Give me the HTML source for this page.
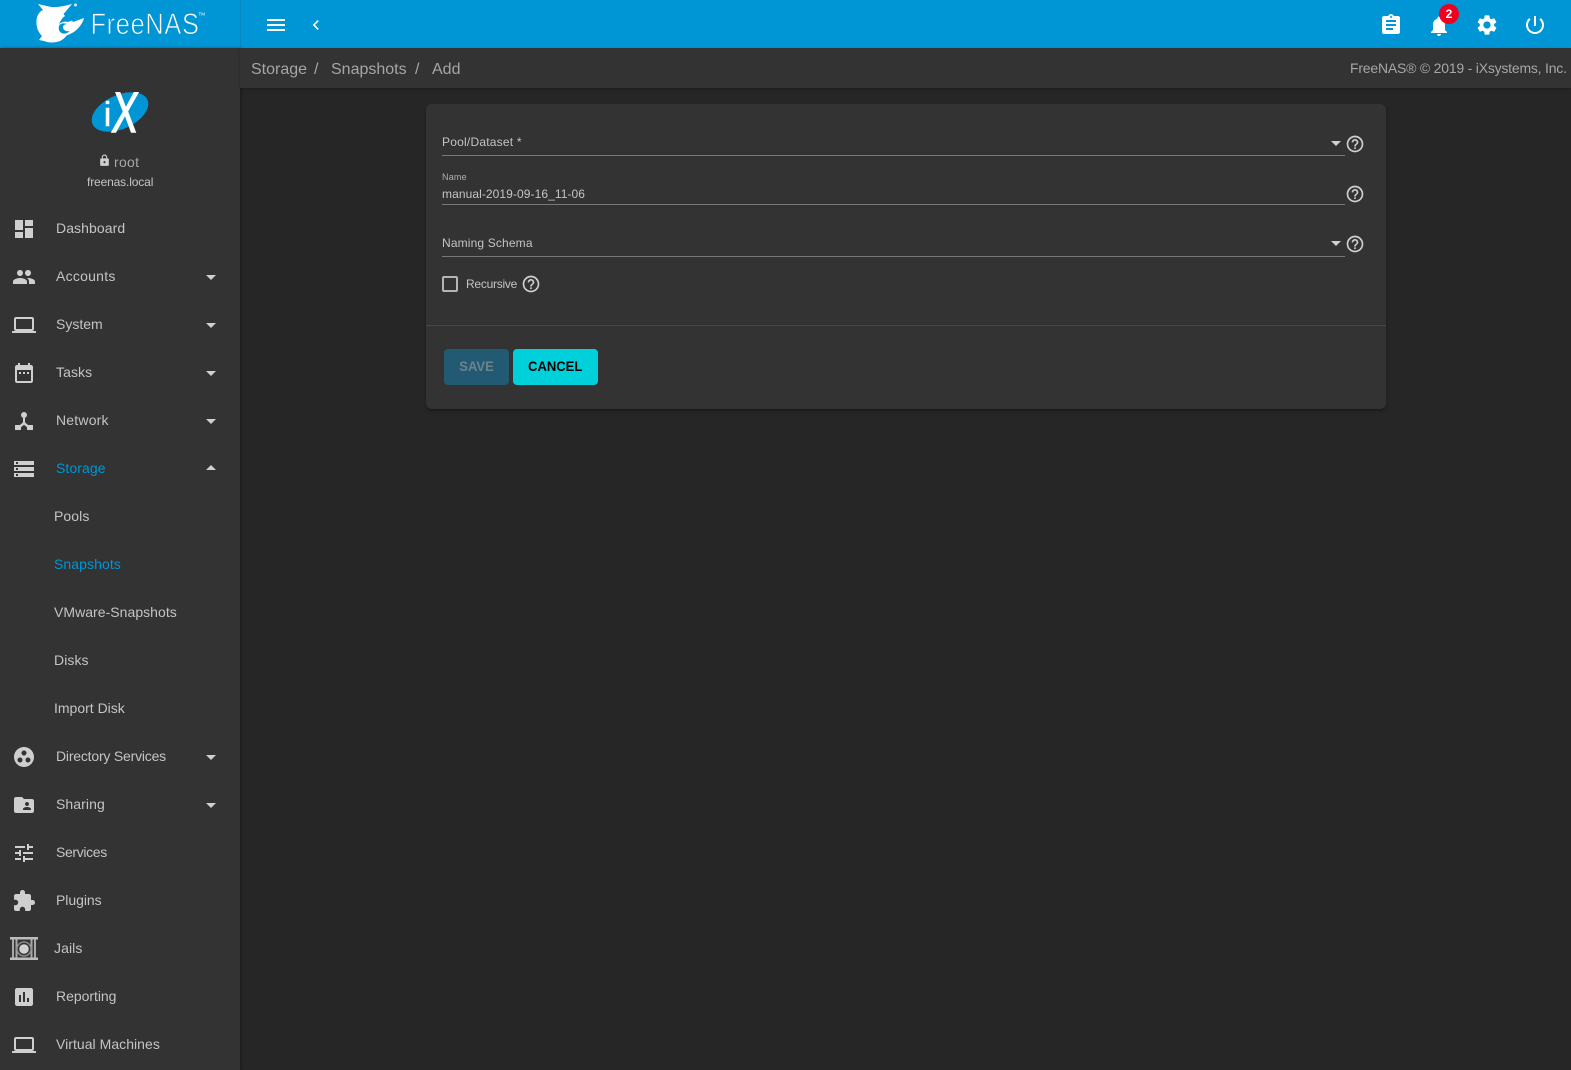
<!DOCTYPE html>
<html lang="en"><head><meta charset="utf-8"><title>FreeNAS - Add Snapshot</title>
<style>
html,body{margin:0;padding:0;width:1571px;height:1070px;overflow:hidden;background:#262626;font-family:"Liberation Sans",sans-serif;color:#c4c4c4}
*{box-sizing:border-box}
.a{position:absolute}
.t{position:absolute;white-space:nowrap;line-height:20px;height:20px}
svg{position:absolute;overflow:visible}
svg.i{width:24px;height:24px;fill:#cfcfcf}
.nav{font-size:14px;letter-spacing:.08px;color:#c4c4c4}
.car{position:absolute;left:206px;width:0;height:0;border-left:5px solid transparent;border-right:5px solid transparent;border-top:5px solid #d0d0d0}
.car.up{border-top:0;border-bottom:5px solid #d0d0d0}
.blue{color:#0095d5}
.line{position:absolute;left:442px;width:903px;height:1px;background:#777}
.fld{font-size:12px;letter-spacing:.22px;color:#c4c4c4}
.help{width:20px;height:20px;fill:#cfcfcf}
.sc{position:absolute;left:1331px;width:0;height:0;border-left:5px solid transparent;border-right:5px solid transparent;border-top:5px solid #d0d0d0}
.bc{font-size:16px;color:#a6a6a6;letter-spacing:0}
.btn span{display:inline-block;transform:scaleX(.93);font-weight:bold}
</style></head><body>

<div class="a" style="left:0;top:0;width:1571px;height:48px;background:#0095d5"></div>
<div class="a" style="left:240px;top:0;width:1px;height:48px;background:#0a87bd"></div>
<div class="a" style="left:0;top:48px;width:240px;height:1022px;background:#333;box-shadow:1px 0 3px rgba(0,0,0,.35)"></div>
<div class="a" style="left:240px;top:48px;width:1331px;height:40px;background:#333;box-shadow:0 1px 2px rgba(0,0,0,.25)"></div>

<!-- brand -->
<svg style="left:0;top:0" width="240" height="48">
<path fill="#fff" d="M38 4L50 6.700C54 7.500 60 7.300 72 4L67 10L63.500 14L65 16L62.500 18C61 20 60 22 59 24C62 22 65 21 68 22L72 20.500L73 22L84 18C83 23 78 30 72 33L66 36C65 38 62 40 60 41C55 43 48 43 44 41L39 40L42 36C38 32 36 27 36.500 20C37 15 40 11 43 10Z"/>
<path fill="#0095d5" d="M59 26C58 30 60 33 63 33.500C65 34 68 33 70 31C66 32 63 30 63 27C63 25.500 65 24 67 24C64 23 60 23 59 26Z"/>
<circle cx="75.500" cy="5" r="1.500" fill="#cfe9f6"/>
<text transform="translate(90.500 34) scale(.86 1)" font-family="Liberation Sans" font-size="29.500" letter-spacing=".8" fill="#fff" stroke="#0095d5" stroke-width=".8">FreeNAS</text>
<text x="198.500" y="15.500" font-family="Liberation Sans" font-size="4.500" fill="#fff">TM</text>
</svg>

<svg class="i" viewBox="0 0 24 24" style="left:264px;top:13px;fill:#fff"><path d="M3 18h18v-2H3v2zm0-5h18v-2H3v2zm0-7v2h18V6H3z"/></svg>
<svg viewBox="0 0 24 24" style="left:305.500px;top:15px;width:20px;height:20px;fill:#fff"><path d="M15.410 7.410L14 6l-6 6 6 6 1.410-1.410L10.830 12z"/></svg>

<svg class="i" viewBox="0 0 24 24" style="left:1379px;top:13px;fill:#fff"><path d="M19 3h-4.180C14.400 1.840 13.300 1 12 1c-1.300 0-2.400.84-2.820 2H5c-1.100 0-2 .9-2 2v14c0 1.100.9 2 2 2h14c1.100 0 2-.9 2-2V5c0-1.100-.9-2-2-2zm-7 0c.55 0 1 .45 1 1s-.45 1-1 1-1-.45-1-1 .45-1 1-1zm2 14H7v-2h7v2zm3-4H7v-2h10v2zm0-4H7V7h10v2z"/></svg>
<svg class="i" viewBox="0 0 24 24" style="left:1427px;top:14px;fill:#fff"><path d="M12 22c1.100 0 2-.9 2-2h-4c0 1.100.89 2 2 2zm6-6v-5c0-3.070-1.640-5.640-4.500-6.320V4c0-.83-.67-1.500-1.500-1.500s-1.500.67-1.500 1.500v.68C7.630 5.360 6 7.920 6 11v5l-2 2v1h16v-1l-2-2z"/></svg>
<div class="a" style="left:1439px;top:4px;width:20px;height:20px;border-radius:50%;background:#f0001f;color:#fff;font-size:12px;font-weight:bold;text-align:center;line-height:20px">2</div>
<svg class="i" viewBox="0 0 24 24" style="left:1475px;top:13px;fill:#fff"><path d="M19.140 12.940c.04-.3.06-.61.06-.94 0-.32-.02-.64-.07-.94l2.030-1.580c.18-.14.23-.41.12-.61l-1.920-3.320c-.12-.22-.37-.29-.59-.22l-2.390.96c-.5-.38-1.030-.7-1.620-.94l-.36-2.540c-.04-.24-.24-.41-.48-.41h-3.840c-.24 0-.43.17-.47.41l-.36 2.540c-.59.24-1.130.57-1.620.94l-2.390-.96c-.22-.08-.47 0-.59.22L2.740 8.870c-.12.21-.08.47.12.61l2.030 1.580c-.05.3-.09.63-.09.94s.02.64.07.94l-2.030 1.580c-.18.14-.23.41-.12.61l1.920 3.320c.12.22.37.29.59.22l2.390-.96c.5.38 1.030.7 1.620.94l.36 2.540c.05.24.24.41.48.41h3.840c.24 0 .44-.17.47-.41l.36-2.540c.59-.24 1.130-.56 1.620-.94l2.390.96c.22.08.47 0 .59-.22l1.920-3.320c.12-.22.07-.47-.12-.61l-2.010-1.580zM12 15.600c-1.980 0-3.600-1.620-3.600-3.600s1.620-3.600 3.600-3.600 3.600 1.620 3.600 3.600-1.620 3.600-3.600 3.600z"/></svg>
<svg class="i" viewBox="0 0 24 24" style="left:1523px;top:13px;fill:#fff"><path d="M13 3h-2v10h2V3zm4.830 2.170l-1.420 1.420C17.990 7.860 19 9.810 19 12c0 3.870-3.130 7-7 7s-7-3.130-7-7c0-2.190 1.010-4.140 2.580-5.420L6.170 5.170C4.230 6.820 3 9.260 3 12c0 4.970 4.030 9 9 9s9-4.030 9-9c0-2.740-1.230-5.180-3.170-6.830z"/></svg>

<!-- breadcrumb -->
<div class="t bc" style="left:251px;top:60px">Storage</div>
<div class="t bc" style="left:314px;top:60px">/</div>
<div class="t bc" style="left:331px;top:60px">Snapshots</div>
<div class="t bc" style="left:415px;top:60px">/</div>
<div class="t bc" style="left:432px;top:60px">Add</div>
<div class="t" style="left:1350px;top:58px;font-size:14px;color:#a6a6a6;letter-spacing:-.21px">FreeNAS® © 2019 - iXsystems, Inc.</div>

<!-- user -->
<svg style="left:0;top:0" width="240" height="148">
<ellipse cx="120" cy="112" rx="30" ry="17" fill="#0095d5" transform="rotate(-24 120 112)"/>
<text transform="translate(103.700 126)" font-family="Liberation Sans" font-size="34" fill="#fff" stroke="#fff" stroke-width=".5">i</text>
<text transform="translate(111 132) skewX(-5) scale(.66 1)" font-family="Liberation Sans" font-size="57" fill="#fff" stroke="#fff" stroke-width="1.600">X</text>
</svg>
<svg viewBox="0 0 24 24" style="left:97.500px;top:154px;width:13px;height:13px;fill:#cfcfcf"><path d="M18 8h-1V6c0-2.760-2.240-5-5-5S7 3.240 7 6v2H6c-1.100 0-2 .9-2 2v10c0 1.100.9 2 2 2h12c1.100 0 2-.9 2-2V10c0-1.100-.9-2-2-2zm-6 9c-1.100 0-2-.9-2-2s.9-2 2-2 2 .9 2 2-.9 2-2 2zm3.100-9H8.900V6c0-1.710 1.390-3.100 3.100-3.100 1.710 0 3.100 1.390 3.100 3.100v2z"/></svg>
<div class="t" style="left:114px;top:152px;font-size:14px;color:#a8a8a8;letter-spacing:.3px">root</div>
<div class="t" style="left:87px;top:172px;font-size:12px;color:#c4c4c4;letter-spacing:-.14px">freenas.local</div>

<!-- nav -->
<svg class="i" viewBox="0 0 24 24" style="left:12px;top:217px"><path d="M3 13h8V3H3v10zm0 8h8v-6H3v6zm10 0h8V11h-8v10zm0-18v6h8V3h-8z"/></svg>
<div class="t nav" style="left:56px;top:218px">Dashboard</div>

<svg class="i" viewBox="0 0 24 24" style="left:12px;top:265px"><path d="M16 11c1.660 0 2.990-1.340 2.990-3S17.660 5 16 5c-1.660 0-3 1.340-3 3s1.340 3 3 3zm-8 0c1.660 0 2.990-1.340 2.990-3S9.660 5 8 5C6.340 5 5 6.340 5 8s1.340 3 3 3zm0 2c-2.330 0-7 1.170-7 3.500V19h14v-2.500c0-2.330-4.670-3.500-7-3.500zm8 0c-.29 0-.62.02-.97.05 1.160.84 1.970 1.970 1.970 3.450V19h6v-2.500c0-2.330-4.670-3.500-7-3.500z"/></svg>
<div class="t nav" style="left:56px;top:266px;letter-spacing:.25px">Accounts</div><div class="car" style="top:275px"></div>

<svg class="i" viewBox="0 0 24 24" style="left:12px;top:313px"><path d="M20 18c1.100 0 1.990-.9 1.990-2L22 6c0-1.100-.9-2-2-2H4c-1.100 0-2 .9-2 2v10c0 1.100.9 2 2 2H0v2h24v-2h-4zM4 6h16v10H4V6z"/></svg>
<div class="t nav" style="left:56px;top:314px;letter-spacing:0">System</div><div class="car" style="top:323px"></div>

<svg class="i" viewBox="0 0 24 24" style="left:12px;top:362px"><path d="M19 3h-1V1h-2v2H8V1H6v2H5c-1.110 0-1.990.9-1.990 2L3 19c0 1.100.89 2 2 2h14c1.100 0 2-.9 2-2V5c0-1.100-.9-2-2-2zm0 16H5V8h14v11zM9 10H7v2h2v-2zm4 0h-2v2h2v-2zm4 0h-2v2h2v-2z"/></svg>
<div class="t nav" style="left:56px;top:362px">Tasks</div><div class="car" style="top:371px"></div>

<svg class="i" viewBox="0 0 24 24" style="left:12px;top:408px"><circle cx="12" cy="7" r="3"/><path d="M3 17h5l3-2.600V10h2v4.400L16 17h5v5h-6v-2.700l-3-2.600-3 2.600V22H3z"/></svg>
<div class="t nav" style="left:56px;top:410px;letter-spacing:.2px">Network</div><div class="car" style="top:419px"></div>

<svg class="i" viewBox="0 0 24 24" style="left:12px;top:457px"><path d="M2 20h20v-4H2v4zm2-3h2v2H4v-2zM2 4v4h20V4H2zm4 3H4V5h2v2zm-4 7h20v-4H2v4zm2-3h2v2H4v-2z"/></svg>
<div class="t nav blue" style="left:56px;top:458px">Storage</div><div class="car up" style="top:465px"></div>

<div class="t nav" style="left:54px;top:506px">Pools</div>
<div class="t nav blue" style="left:54px;top:554px">Snapshots</div>
<div class="t nav" style="left:54px;top:602px;letter-spacing:.04px">VMware-Snapshots</div>
<div class="t nav" style="left:54px;top:650px">Disks</div>
<div class="t nav" style="left:54px;top:698px;letter-spacing:0">Import Disk</div>

<svg class="i" viewBox="0 0 24 24" style="left:12px;top:745px"><path d="M12 2C6.480 2 2 6.480 2 12s4.480 10 10 10 10-4.480 10-10S17.520 2 12 2zM8 17.500c-1.380 0-2.500-1.120-2.500-2.500s1.120-2.500 2.500-2.500 2.500 1.120 2.500 2.500-1.120 2.500-2.500 2.500zM9.500 8c0-1.380 1.120-2.500 2.500-2.500s2.500 1.120 2.500 2.500-1.120 2.500-2.500 2.500S9.500 9.380 9.500 8zm6.500 9.500c-1.380 0-2.500-1.120-2.500-2.500s1.120-2.500 2.500-2.500 2.500 1.120 2.500 2.500-1.120 2.500-2.500 2.500z"/></svg>
<div class="t nav" style="left:56px;top:746px;letter-spacing:-.2px">Directory Services</div><div class="car" style="top:755px"></div>

<svg class="i" viewBox="0 0 24 24" style="left:12px;top:793px"><path d="M20 6h-8l-2-2H4c-1.100 0-1.990.9-1.990 2L2 18c0 1.100.9 2 2 2h16c1.100 0 2-.9 2-2V8c0-1.100-.9-2-2-2zm-5 3c1.100 0 2 .9 2 2s-.9 2-2 2-2-.9-2-2 .9-2 2-2zm4 8h-8v-1c0-1.330 2.670-2 4-2s4 .67 4 2v1z"/></svg>
<div class="t nav" style="left:56px;top:794px">Sharing</div><div class="car" style="top:803px"></div>

<svg class="i" viewBox="0 0 24 24" style="left:12px;top:841px"><path d="M3 17v2h6v-2H3zM3 5v2h10V5H3zm10 16v-2h8v-2h-8v-2h-2v6h2zM7 9v2H3v2h4v2h2V9H7zm14 4v-2H11v2h10zm-6-4h2V7h4V5h-4V3h-2v6z"/></svg>
<div class="t nav" style="left:56px;top:842px;letter-spacing:-.35px">Services</div>

<svg class="i" viewBox="0 0 24 24" style="left:12px;top:889px"><path d="M20.500 11H19V7c0-1.100-.9-2-2-2h-4V3.500C13 2.120 11.880 1 10.500 1S8 2.120 8 3.500V5H4c-1.100 0-1.990.9-1.990 2v3.800H3.500c1.490 0 2.700 1.210 2.700 2.700s-1.210 2.700-2.700 2.700H2V20c0 1.100.9 2 2 2h3.800v-1.500c0-1.490 1.210-2.700 2.700-2.700 1.490 0 2.700 1.210 2.700 2.700V22H17c1.100 0 2-.9 2-2v-4h1.500c1.380 0 2.500-1.120 2.500-2.500S21.880 11 20.500 11z"/></svg>
<div class="t nav" style="left:56px;top:890px;letter-spacing:-.05px">Plugins</div>

<svg style="left:10px;top:937px" width="28" height="24" viewBox="0 0 28 24">
<rect x="0" y="0" width="28" height="2.500" fill="#bcbcbc"/><rect x="0" y="20.500" width="28" height="2.500" fill="#bcbcbc"/>
<rect x="2" y="2.500" width="2" height="18" fill="#a8a8a8"/><rect x="5.500" y="2.500" width="2" height="18" fill="#a8a8a8"/><rect x="20.500" y="2.500" width="2" height="18" fill="#a8a8a8"/><rect x="24" y="2.500" width="2" height="18" fill="#a8a8a8"/>
<circle cx="14" cy="12" r="7" fill="none" stroke="#8c8c8c" stroke-width="1.500"/><circle cx="14" cy="12" r="4.800" fill="#d2d2d2"/>
</svg>
<div class="t nav" style="left:54px;top:938px">Jails</div>

<svg class="i" viewBox="0 0 24 24" style="left:12px;top:985px"><path d="M19 3H5c-1.100 0-2 .9-2 2v14c0 1.100.9 2 2 2h14c1.100 0 2-.9 2-2V5c0-1.100-.9-2-2-2zM9 17H7v-7h2v7zm4 0h-2V7h2v10zm4 0h-2v-4h2v4z"/></svg>
<div class="t nav" style="left:56px;top:986px;letter-spacing:-.03px">Reporting</div>

<svg class="i" viewBox="0 0 24 24" style="left:12px;top:1033px"><path d="M20 18c1.100 0 1.990-.9 1.990-2L22 6c0-1.100-.9-2-2-2H4c-1.100 0-2 .9-2 2v10c0 1.100.9 2 2 2H0v2h24v-2h-4zM4 6h16v10H4V6z"/></svg>
<div class="t nav" style="left:56px;top:1034px;letter-spacing:.04px">Virtual Machines</div>

<!-- card -->
<div class="a" style="left:426px;top:104px;width:960px;height:305px;background:#333;border-radius:6px;box-shadow:0 2px 3px rgba(0,0,0,.3)"></div>

<div class="t fld" style="left:442px;top:132px">Pool/Dataset *</div>
<div class="sc" style="top:141px"></div>
<div class="line" style="top:155px"></div>
<svg class="help" viewBox="0 0 24 24" style="left:1345px;top:134px"><path d="M11 18h2v-2h-2v2zm1-16C6.480 2 2 6.480 2 12s4.480 10 10 10 10-4.480 10-10S17.520 2 12 2zm0 18c-4.410 0-8-3.590-8-8s3.590-8 8-8 8 3.590 8 8-3.590 8-8 8zm0-14c-2.210 0-4 1.790-4 4h2c0-1.100.9-2 2-2s2 .9 2 2c0 2-3 1.750-3 5h2c0-2.250 3-2.500 3-5 0-2.210-1.790-4-4-4z"/></svg>

<div class="t" style="left:442px;top:167px;font-size:9px;color:#b0b0b0;letter-spacing:.2px">Name</div>
<div class="t fld" style="left:442px;top:184px;letter-spacing:.08px">manual-2019-09-16_11-06</div>
<div class="line" style="top:204px"></div>
<svg class="help" viewBox="0 0 24 24" style="left:1345px;top:184px"><path d="M11 18h2v-2h-2v2zm1-16C6.480 2 2 6.480 2 12s4.480 10 10 10 10-4.480 10-10S17.520 2 12 2zm0 18c-4.410 0-8-3.590-8-8s3.590-8 8-8 8 3.590 8 8-3.590 8-8 8zm0-14c-2.210 0-4 1.790-4 4h2c0-1.100.9-2 2-2s2 .9 2 2c0 2-3 1.750-3 5h2c0-2.250 3-2.500 3-5 0-2.210-1.790-4-4-4z"/></svg>

<div class="t fld" style="left:442px;top:233px;letter-spacing:.15px">Naming Schema</div>
<div class="sc" style="top:241px"></div>
<div class="line" style="top:256px"></div>
<svg class="help" viewBox="0 0 24 24" style="left:1345px;top:234px"><path d="M11 18h2v-2h-2v2zm1-16C6.480 2 2 6.480 2 12s4.480 10 10 10 10-4.480 10-10S17.520 2 12 2zm0 18c-4.410 0-8-3.590-8-8s3.590-8 8-8 8 3.590 8 8-3.590 8-8 8zm0-14c-2.210 0-4 1.790-4 4h2c0-1.100.9-2 2-2s2 .9 2 2c0 2-3 1.750-3 5h2c0-2.250 3-2.500 3-5 0-2.210-1.790-4-4-4z"/></svg>

<div class="a" style="left:442px;top:276px;width:16px;height:16px;border:2px solid #b5b5b5;border-radius:2px"></div>
<div class="t fld" style="left:466px;top:274px;letter-spacing:-.25px">Recursive</div>
<svg class="help" viewBox="0 0 24 24" style="left:521px;top:274px"><path d="M11 18h2v-2h-2v2zm1-16C6.480 2 2 6.480 2 12s4.480 10 10 10 10-4.480 10-10S17.520 2 12 2zm0 18c-4.410 0-8-3.590-8-8s3.590-8 8-8 8 3.590 8 8-3.590 8-8 8zm0-14c-2.210 0-4 1.790-4 4h2c0-1.100.9-2 2-2s2 .9 2 2c0 2-3 1.750-3 5h2c0-2.250 3-2.500 3-5 0-2.210-1.790-4-4-4z"/></svg>

<div class="a" style="left:426px;top:325px;width:960px;height:1px;background:#464646"></div>

<div class="a btn" style="left:444px;top:349px;width:65px;height:36px;background:#215a72;border-radius:4px;color:#6e828c;font-size:14px;text-align:center;line-height:34px"><span>SAVE</span></div>
<div class="a btn" style="left:513px;top:349px;width:85px;height:36px;background:#00d0da;border-radius:4px;color:#000;font-size:14px;text-align:center;line-height:34px"><span>CANCEL</span></div>

</body></html>
